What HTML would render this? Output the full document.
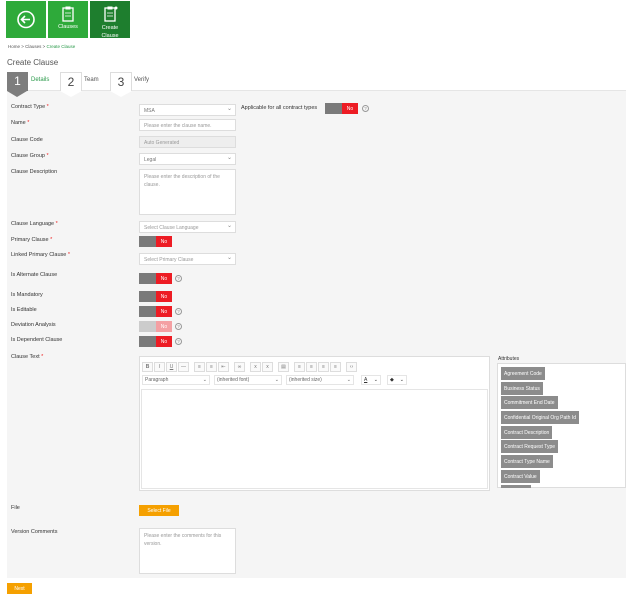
<!DOCTYPE html>
<html><head><meta charset="utf-8"><style>
*{margin:0;padding:0;box-sizing:border-box}
body{width:626px;height:599px;background:#fff;font-family:"Liberation Sans",sans-serif;position:relative;overflow:hidden;color:#333}
.a{position:absolute}
.tb{position:absolute;top:1px;width:40px;height:37px;background:#2eaa3a;color:#fff;font-size:5.5px;text-align:center}
.lbl{position:absolute;left:11px;font-size:5.5px;color:#333}
.lbl i{color:#e22;font-style:normal}
.in{position:absolute;left:139px;width:97px;height:12px;background:#fff;border:1px solid #ddd;font-size:5px;color:#999;padding:3px 4px}
.sel::after{content:"⌄";position:absolute;right:3px;top:0;font-size:6px;color:#888}
.tg{position:absolute;left:139px;width:33px;height:11px}
.tg b{position:absolute;left:0;top:0;width:17px;height:11px;background:#7a7a7a}
.tg span{position:absolute;left:17px;top:0;width:16px;height:11px;background:#ed1c24;color:#fff;font-size:5px;display:flex;align-items:center;justify-content:center}
.q{position:absolute;width:7px;height:7px;border:1px solid #999;border-radius:50%;font-size:4.5px;color:#888;display:flex;align-items:center;justify-content:center}
.chip{position:absolute;left:501px;height:13px;background:#8c8c8c;color:#fff;font-size:5px;padding:0 3px;display:flex;align-items:center;white-space:nowrap}
.btn{position:absolute;background:#f5a000;color:#fff;font-size:5px;display:flex;align-items:center;justify-content:center}
.tbar{position:absolute;left:142px;top:362px;display:flex;gap:1px}
.ib{width:11px;height:10px;border:1px solid #ddd;background:#fafafa;font-size:5px;display:flex;align-items:center;justify-content:center;color:#777}
.sp{width:3px}
.dd{position:absolute;top:375px;height:10px;background:#fff;border:1px solid #e5e5e5;font-size:5px;color:#666;padding:0 2px;display:flex;align-items:center;justify-content:space-between}
</style></head><body>
<div class="tb" style="left:6px"><svg width="40" height="37"><circle cx="20" cy="18.5" r="8" fill="none" stroke="#fff" stroke-width="1.6"/><path d="M24 18.5H16M19 15l-3.5 3.5L19 22" fill="none" stroke="#fff" stroke-width="1.6"/></svg></div>
<div class="tb" style="left:48px"><svg width="40" height="20" style="display:block;margin-top:4px"><rect x="15" y="3" width="10" height="13" fill="none" stroke="#fff" stroke-width="1.3"/><rect x="17.5" y="1.5" width="5" height="3" fill="#fff"/><path d="M17 8h6M17 11h6" stroke="#fff" stroke-width="0.8"/></svg><div style="margin-top:-1px">Clauses</div></div>
<div class="tb" style="left:90px;background:#1e7e2e"><svg width="40" height="20" style="display:block;margin-top:4px"><rect x="15" y="3" width="10" height="13" fill="none" stroke="#fff" stroke-width="1.3"/><rect x="17.5" y="1.5" width="5" height="3" fill="#fff"/><path d="M17 8h6M17 11h6" stroke="#fff" stroke-width="0.8"/><circle cx="26" cy="3" r="1.5" fill="#fff"/></svg><div style="margin-top:-1px;line-height:8px">Create<br>Clause</div></div>
<div class="a" style="left:8px;top:44px;font-size:4.5px;color:#555">Home &gt; Clauses &gt; <span style="color:#2a9a4a">Create Clause</span></div>
<div class="a" style="left:7px;top:58px;font-size:8px;color:#555">Create Clause</div>
<div class="a" style="left:7px;top:90px;width:619px;height:488px;background:#f5f5f5;border-top:1px solid #e5e5e5"></div>
<div class="a" style="left:7px;top:72px;width:21px;height:19px;background:#7d7d7d;color:#fff;font-size:12px;text-align:center;line-height:19px">1</div>
<div class="a" style="left:7px;top:91px;width:0;height:0;border-left:10.5px solid transparent;border-right:10.5px solid transparent;border-top:6px solid #7d7d7d"></div>
<div class="a" style="left:31px;top:77px;font-size:6px;color:#2a9a4a">Details</div>
<div class="a" style="left:60px;top:72px;width:22px;height:19px;background:#fff;border:1px solid #ddd;border-bottom:none;font-size:12px;text-align:center;line-height:18px;color:#444">2</div>
<div class="a" style="left:60px;top:91px;width:0;height:0;border-left:11px solid transparent;border-right:11px solid transparent;border-top:6px solid #fff"></div>
<div class="a" style="left:84px;top:77px;font-size:6px;color:#555">Team</div>
<div class="a" style="left:110px;top:72px;width:22px;height:19px;background:#fff;border:1px solid #ddd;border-bottom:none;font-size:12px;text-align:center;line-height:18px;color:#444">3</div>
<div class="a" style="left:110px;top:91px;width:0;height:0;border-left:11px solid transparent;border-right:11px solid transparent;border-top:6px solid #fff"></div>
<div class="a" style="left:134px;top:77px;font-size:6px;color:#555">Verify</div>

<div class="lbl" style="top:104px">Contract Type <i>*</i></div><div class="in sel" style="top:104px;color:#777">MSA</div>
<div class="a" style="left:241px;top:105px;font-size:5.5px">Applicable for all contract types</div>
<div class="tg" style="left:325px;top:103px"><b></b><span>No</span></div><div class="q" style="left:362px;top:105px">?</div>
<div class="lbl" style="top:120px">Name <i>*</i></div><div class="in" style="top:119px">Please enter the clause name.</div>
<div class="lbl" style="top:137px">Clause Code</div><div class="in" style="top:136px;background:#eee">Auto Generated</div>
<div class="lbl" style="top:153px">Clause Group <i>*</i></div><div class="in sel" style="top:153px;color:#777">Legal</div>
<div class="lbl" style="top:169px">Clause Description</div><div class="in" style="top:169px;height:46px;line-height:8px">Please enter the description of the clause.</div>
<div class="lbl" style="top:221px">Clause Language <i>*</i></div><div class="in sel" style="top:221px">Select Clause Language</div>
<div class="lbl" style="top:237px">Primary Clause <i>*</i></div><div class="tg" style="top:236px"><b></b><span>No</span></div>
<div class="lbl" style="top:252px">Linked Primary Clause <i>*</i></div><div class="in sel" style="top:253px">Select Primary Clause</div>
<div class="lbl" style="top:272px">Is Alternate Clause</div><div class="tg" style="top:273px"><b></b><span>No</span></div><div class="q" style="left:175px;top:275px">?</div>
<div class="lbl" style="top:292px">Is Mandatory</div><div class="tg" style="top:291px"><b></b><span>No</span></div>
<div class="lbl" style="top:307px">Is Editable</div><div class="tg" style="top:306px"><b></b><span>No</span></div><div class="q" style="left:175px;top:308px">?</div>
<div class="lbl" style="top:322px">Deviation Analysis</div><div class="tg" style="top:321px"><b style="background:#ccc"></b><span style="background:#f4a0a3">No</span></div><div class="q" style="left:175px;top:323px">?</div>
<div class="lbl" style="top:337px">Is Dependent Clause</div><div class="tg" style="top:336px"><b></b><span>No</span></div><div class="q" style="left:175px;top:338px">?</div>
<div class="lbl" style="top:354px">Clause Text <i>*</i></div>
<div class="a" style="left:139px;top:356px;width:351px;height:135px;background:#fff;border:1px solid #ddd"></div>
<div class="tbar"><div class="ib"><b>B</b></div><div class="ib"><i>I</i></div><div class="ib"><u>U</u></div><div class="ib">—</div><div class="sp"></div><div class="ib">≡</div><div class="ib">≡</div><div class="ib">⇤</div><div class="sp"></div><div class="ib">∞</div><div class="sp"></div><div class="ib">x</div><div class="ib">x</div><div class="sp"></div><div class="ib">▤</div><div class="sp"></div><div class="ib">≡</div><div class="ib">≡</div><div class="ib">≡</div><div class="ib">≡</div><div class="sp"></div><div class="ib">‹›</div></div>
<div class="dd" style="left:142px;width:68px"><span>Paragraph</span><span>⌄</span></div>
<div class="dd" style="left:214px;width:68px"><span>(inherited font)</span><span>⌄</span></div>
<div class="dd" style="left:286px;width:68px"><span>(inherited size)</span><span>⌄</span></div>
<div class="dd" style="left:361px;width:20px;color:#333"><span style="text-decoration:underline">A</span><span>⌄</span></div>
<div class="dd" style="left:387px;width:20px;color:#333"><span>◆</span><span>⌄</span></div>
<div class="a" style="left:141px;top:389px;width:347px;height:100px;background:#fff;border:1px solid #e5e5e5"></div>
<div class="a" style="left:498px;top:356px;font-size:5px">Attributes</div>
<div class="a" style="left:497px;top:363px;width:129px;height:125px;background:#fff;border:1px solid #ddd"></div>
<div class="chip" style="top:367px">Agreement Code</div>
<div class="chip" style="top:382px">Business Status</div>
<div class="chip" style="top:396px">Commitment End Date</div>
<div class="chip" style="top:411px">Confidential Original Org Path Id</div>
<div class="chip" style="top:426px">Contract Description</div>
<div class="chip" style="top:440px">Contract Request Type</div>
<div class="chip" style="top:455px">Contract Type Name</div>
<div class="chip" style="top:470px">Contract Value</div>
<div class="chip" style="top:485px;height:3px;width:30px"></div>
<div class="lbl" style="top:505px">File</div>
<div class="btn" style="left:139px;top:505px;width:40px;height:11px">Select File</div>
<div class="lbl" style="top:529px">Version Comments</div>
<div class="in" style="top:528px;height:46px;line-height:8px">Please enter the comments for this version.</div>
<div class="btn" style="left:7px;top:583px;width:25px;height:11px">Next</div>
</body></html>
